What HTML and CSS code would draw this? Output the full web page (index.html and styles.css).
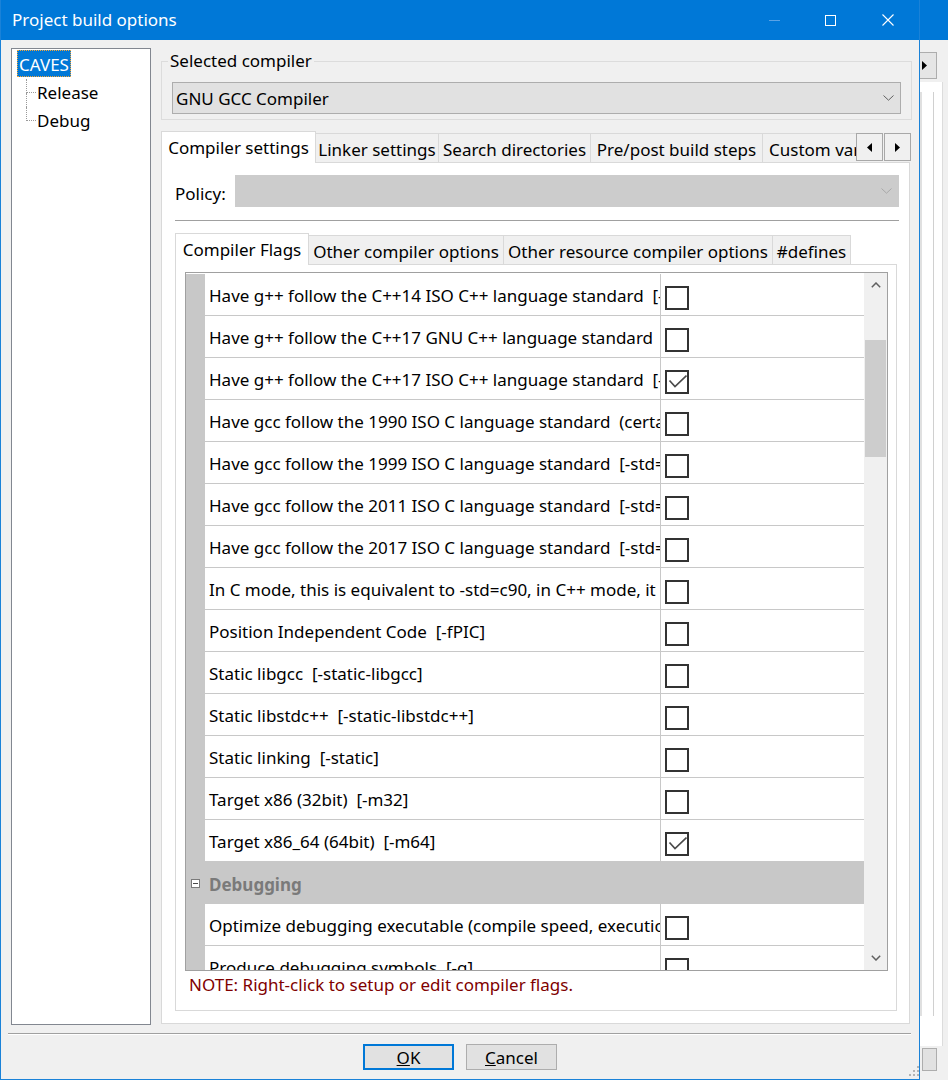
FILE: index.html
```html
<!DOCTYPE html>
<html>
<head>
<meta charset="utf-8">
<title>Project build options</title>
<link rel="stylesheet" href="styles.css">
</head>
<body>
<div class="desktop">
  <div class="window">
    <div class="titlebar">
      <span class="title">Project build options</span>
      <div class="caption">
        <span class="cbtn cbtn-min"><svg width="11" height="11" viewBox="0 0 11 11"><path d="M0 5.5H11" stroke="#5aa3e6" stroke-width="1"/></svg></span>
        <span class="cbtn"><svg width="11" height="11" viewBox="0 0 11 11"><rect x="0.5" y="0.5" width="10" height="10" fill="none" stroke="#fff" stroke-width="1"/></svg></span>
        <span class="cbtn"><svg width="12" height="12" viewBox="0 0 12 12"><path d="M0.5 0.5L11.5 11.5M11.5 0.5L0.5 11.5" stroke="#fff" stroke-width="1.1"/></svg></span>
      </div>
    </div>
    <div class="client">
      <div class="main">
        <div class="tree">
          <div class="tree-root"><span class="tree-sel">CAVES</span></div>
          <div class="tree-children">
            <div class="tree-item">
              <span class="conn"><span class="conn-top"></span><span class="conn-bot"></span></span>
              <span class="tree-label">Release</span>
            </div>
            <div class="tree-item">
              <span class="conn"><span class="conn-top"></span><span class="conn-bot conn-last"></span></span>
              <span class="tree-label">Debug</span>
            </div>
          </div>
        </div>
        <div class="right">
          <fieldset class="group">
            <legend>Selected compiler</legend>
            <div class="combo">
              <span class="combo-text">GNU GCC Compiler</span>
              <svg class="chev" width="11" height="6" viewBox="0 0 11 6"><path d="M0.5 0.5L5.5 5.2L10.5 0.5" fill="none" stroke="#606060" stroke-width="1"/></svg>
            </div>
          </fieldset>
          <div class="tabrow">
            <div class="tabs outer-tabs">
              <span class="tab active">Compiler settings</span>
              <span class="tab">Linker settings</span>
              <span class="tab">Search directories</span>
              <span class="tab">Pre/post build steps</span>
              <span class="tab">Custom variables</span>
            </div>
            <div class="spin">
              <span class="spin-btn"><svg width="5" height="9" viewBox="0 0 5 9"><path d="M5 0V9L0 4.5Z" fill="#000"/></svg></span>
              <span class="spin-btn"><svg width="5" height="9" viewBox="0 0 5 9"><path d="M0 0V9L5 4.5Z" fill="#000"/></svg></span>
            </div>
          </div>
          <div class="tabpage">
            <div class="policy">
              <span class="policy-label">Policy:</span>
              <div class="combo combo-disabled">
                <svg class="chev" width="11" height="6" viewBox="0 0 11 6"><path d="M0.5 0.5L5.5 5.2L10.5 0.5" fill="none" stroke="#a8a8a8" stroke-width="1"/></svg>
              </div>
            </div>
            <div class="hsep"></div>
            <div class="tabs inner-tabs">
              <span class="tab active">Compiler Flags</span>
              <span class="tab">Other compiler options</span>
              <span class="tab">Other resource compiler options</span>
              <span class="tab">#defines</span>
            </div>
            <div class="innerpage">
              <div class="grid">
                <div class="grid-rows">
                  <div class="row"><span class="gutter"></span><span class="label">Have g++ follow the C++14 ISO C++ language standard  [-std=c++14]</span><span class="value"><span class="cb"></span></span></div>
                  <div class="row"><span class="gutter"></span><span class="label">Have g++ follow the C++17 GNU C++ language standard  [-std=gnu++17]</span><span class="value"><span class="cb"></span></span></div>
                  <div class="row"><span class="gutter"></span><span class="label">Have g++ follow the C++17 ISO C++ language standard  [-std=c++17]</span><span class="value"><span class="cb"><svg width="20" height="20" viewBox="0 0 20 20"><path d="M2.5 8.5L8 14.5L19.5 3.5" fill="none" stroke="#4a4a4a" stroke-width="1.7"/></svg></span></span></div>
                  <div class="row"><span class="gutter"></span><span class="label">Have gcc follow the 1990 ISO C language standard  (certain GNU extensions are disabled)  [-std=c90]</span><span class="value"><span class="cb"></span></span></div>
                  <div class="row"><span class="gutter"></span><span class="label">Have gcc follow the 1999 ISO C language standard  [-std=c99]</span><span class="value"><span class="cb"></span></span></div>
                  <div class="row"><span class="gutter"></span><span class="label">Have gcc follow the 2011 ISO C language standard  [-std=c11]</span><span class="value"><span class="cb"></span></span></div>
                  <div class="row"><span class="gutter"></span><span class="label">Have gcc follow the 2017 ISO C language standard  [-std=c17]</span><span class="value"><span class="cb"></span></span></div>
                  <div class="row"><span class="gutter"></span><span class="label">In C mode, this is equivalent to -std=c90, in C++ mode, it is equivalent to -std=c++98  [-ansi]</span><span class="value"><span class="cb"></span></span></div>
                  <div class="row"><span class="gutter"></span><span class="label">Position Independent Code  [-fPIC]</span><span class="value"><span class="cb"></span></span></div>
                  <div class="row"><span class="gutter"></span><span class="label">Static libgcc  [-static-libgcc]</span><span class="value"><span class="cb"></span></span></div>
                  <div class="row"><span class="gutter"></span><span class="label">Static libstdc++  [-static-libstdc++]</span><span class="value"><span class="cb"></span></span></div>
                  <div class="row"><span class="gutter"></span><span class="label">Static linking  [-static]</span><span class="value"><span class="cb"></span></span></div>
                  <div class="row"><span class="gutter"></span><span class="label">Target x86 (32bit)  [-m32]</span><span class="value"><span class="cb"></span></span></div>
                  <div class="row"><span class="gutter"></span><span class="label">Target x86_64 (64bit)  [-m64]</span><span class="value"><span class="cb"><svg width="20" height="20" viewBox="0 0 20 20"><path d="M2.5 8.5L8 14.5L19.5 3.5" fill="none" stroke="#4a4a4a" stroke-width="1.7"/></svg></span></span></div>
                  <div class="category"><span class="collapse"><svg width="9" height="9" viewBox="0 0 9 9"><rect x="0.5" y="0.5" width="8" height="8" fill="#fff" stroke="#7a7a7a"/><path d="M2 4.5H7" stroke="#4a4a4a"/></svg></span><span class="cat-label">Debugging</span></div>
                  <div class="row"><span class="gutter"></span><span class="label">Optimize debugging executable (compile speed, execution speed, debuggability)  [-Og]</span><span class="value"><span class="cb"></span></span></div>
                  <div class="row"><span class="gutter"></span><span class="label">Produce debugging symbols  [-g]</span><span class="value"><span class="cb"></span></span></div>
                </div>
                <div class="scrollbar">
                  <span class="sb-btn"><svg width="10" height="6" viewBox="0 0 10 6"><path d="M0.8 5.2L5 1L9.2 5.2" fill="none" stroke="#606060" stroke-width="1.5"/></svg></span>
                  <span class="sb-thumb"></span>
                  <span class="sb-btn sb-down"><svg width="10" height="6" viewBox="0 0 10 6"><path d="M0.8 0.8L5 5L9.2 0.8" fill="none" stroke="#606060" stroke-width="1.5"/></svg></span>
                </div>
              </div>
              <div class="note">NOTE: Right-click to setup or edit compiler flags.</div>
            </div>
          </div>
        </div>
      </div>
      <div class="footsep"></div>
      <div class="footer">
        <span></span>
        <div class="btns">
          <span class="btn btn-default"><u>O</u>K</span>
          <span class="btn"><u>C</u>ancel</span>
        </div>
        <span class="grip"><svg width="12" height="12" viewBox="0 0 12 12" fill="#b4b4b4"><rect x="10" y="0" width="2" height="2"/><rect x="6" y="4" width="2" height="2"/><rect x="10" y="4" width="2" height="2"/><rect x="2" y="8" width="2" height="2"/><rect x="6" y="8" width="2" height="2"/><rect x="10" y="8" width="2" height="2"/></svg></span>
      </div>
    </div>
  </div>
  <div class="bgwin">
    <div class="bg-title"></div>
    <div class="bg-body">
      <span class="bg-arrow"><svg width="5" height="9" viewBox="0 0 5 9"><path d="M0 0V9L5 4.5Z" fill="#000"/></svg></span>
      <div class="bg-panel">
        <div class="bg-inner"></div>
      </div>
      <span class="bg-btn"></span>
    </div>
  </div>
</div>
</body>
</html>
```
FILE: styles.css
```css
* { box-sizing: border-box; }
html, body { margin: 0; padding: 0; }
body {
  width: 948px;
  height: 1080px;
  overflow: hidden;
  background: #f0f0f0;
  font-family: "Noto Sans", "Open Sans", sans-serif;
  font-size: 17px;
  color: #000;
}
.desktop { display: flex; width: 948px; height: 1080px; }

/* window */
.window {
  flex: none;
  width: 920px;
  height: 1080px;
  display: flex;
  flex-direction: column;
  background: #f0f0f0;
  border: 1px solid #1a82d8;
  border-top: 0;
}
.titlebar {
  flex: none;
  height: 40px;
  background: #0078d7;
  display: flex;
  align-items: center;
  padding-left: 11px;
  color: #fff;
}
.title { flex: 1; font-size: 17px; line-height: 40px; }
.caption { display: flex; height: 40px; margin-right: 2px; }
.cbtn { width: 58px; display: flex; align-items: center; justify-content: center; }
.cbtn-min { padding-left: 4px; }

.client { flex: 1; display: flex; flex-direction: column; min-height: 0; }
.main { flex: 1; display: flex; padding: 8px 7px 0 10px; min-height: 0; }

/* tree */
.tree {
  flex: none;
  width: 140px;
  background: #fff;
  border: 1px solid #828790;
  padding: 1px 0 0 5px;
}
.tree-root { height: 27px; margin-bottom: 2px; display: flex; }
.tree-sel {
  height: 27px;
  line-height: 25px;
  padding: 1px 1px 0;
  background: #0078d7;
  color: #fff;
  border: 1px dotted #f4a63a;
}
.tree-children { margin-left: 9px; }
.tree-item { display: flex; height: 28px; align-items: stretch; }
.conn { width: 10px; display: flex; flex-direction: column; }
.conn-top { height: 14px; border-left: 1px dotted #9a9a9a; border-bottom: 1px dotted #9a9a9a; }
.conn-bot { flex: 1; border-left: 1px dotted #9a9a9a; }
.conn-last { border-left: 0; }
.tree-label { line-height: 28px; padding-left: 1px; }

/* right side */
.right { flex: 1; min-width: 0; margin-left: 10px; display: flex; flex-direction: column; padding-bottom: 1px; }
.group {
  margin: 2px 0 0;
  padding: 10px 10px 5px;
  border: 1px solid #dcdcdc;
  min-width: 0;
}
.group legend { padding: 0 2px; margin-left: -4px; line-height: 22px; }
.combo {
  height: 32px;
  display: flex;
  align-items: center;
  background: #e1e1e1;
  border: 1px solid #adadad;
  padding: 0 6px 0 3px;
}
.combo-text { flex: 1; }
.chev { margin-left: auto; }

/* tabs */
.tabrow { display: flex; align-items: flex-end; height: 32px; margin-top: 11px; margin-right: 1px; position: relative; z-index: 1; }
.tabs { display: flex; align-items: flex-end; height: 32px; }
.outer-tabs { flex: 1; min-width: 0; overflow: hidden; }
.tab {
  flex: none;
  height: 30px;
  line-height: 26px;
  padding-top: 3px;
  text-align: center;
  white-space: nowrap;
  background: #f0f0f0;
  border: 1px solid #d9d9d9;
  margin-left: -1px;
}
.tab:first-child { margin-left: 0; }
.tab.active {
  height: 32px;
  line-height: 28px;
  padding-top: 2px;
  background: #fff;
  border-bottom: 0;
  position: relative;
  z-index: 1;
}
.outer-tabs .tab:nth-child(1) { width: 155px; }
.outer-tabs .tab:nth-child(2) { width: 124px; }
.outer-tabs .tab:nth-child(3) { width: 153px; }
.outer-tabs .tab:nth-child(4) { width: 173px; }
.outer-tabs .tab:nth-child(5) { width: 150px; text-align: left; padding-left: 6px; }
.spin { display: flex; gap: 1px; margin-bottom: 2px; }
.spin-btn {
  width: 27px;
  height: 28px;
  display: flex;
  align-items: center;
  justify-content: center;
  background: #f0f0f0;
  border: 1px solid #a8a8a8;
}

.tabpage {
  flex: 1;
  min-height: 0;
  margin-top: -1px;
  margin-right: 2px;
  background: #fff;
  border: 1px solid #d9d9d9;
  padding: 12px 10px 12px 13px;
  display: flex;
  flex-direction: column;
}
.policy { display: flex; align-items: center; height: 32px; }
.policy-label { width: 60px; flex: none; padding-top: 5px; }
.combo-disabled { flex: 1; background: #cccccc; border-color: #cccccc; }
.hsep { height: 1px; background: #a0a0a0; margin-top: 13px; flex: none; }

.inner-tabs { margin-top: 12px; flex: none; position: relative; z-index: 1; }
.inner-tabs .tab:nth-child(1) { width: 134px; }
.inner-tabs .tab:nth-child(2) { width: 196px; }
.inner-tabs .tab:nth-child(3) { width: 270px; }
.inner-tabs .tab:nth-child(4) { width: 79px; }

.innerpage {
  flex: 1;
  min-height: 0;
  margin-top: -1px;
  margin-right: 2px;
  border: 1px solid #d9d9d9;
  background: #fff;
  padding: 7px 8px 15px 9px;
  display: flex;
  flex-direction: column;
}

/* property grid */
.grid {
  flex: 1;
  min-height: 0;
  display: flex;
  border: 1px solid #a0a0a0;
}
.grid-rows { flex: 1; min-width: 0; overflow: hidden; padding-top: 1px; }
.row { display: flex; height: 42px; }
.gutter { flex: none; width: 19px; background: #c8c8c8; }
.label {
  flex: none;
  width: 456px;
  overflow: hidden;
  white-space: pre;
  padding: 2px 0 0 4px;
  display: flex;
  align-items: center;
  border-right: 1px solid #c8c8c8;
  border-bottom: 1px solid #c8c8c8;
}
.value {
  flex: 1;
  border-bottom: 1px solid #c8c8c8;
  padding: 12px 0 0 4px;
}
.cb {
  display: block;
  width: 24px;
  height: 24px;
  border: 2px solid #333;
  background: #fff;
}
.cb svg { display: block; }
.category {
  height: 42px;
  background: #c8c8c8;
  display: flex;
  align-items: center;
  padding-left: 5px;
}
.collapse { display: flex; width: 18px; padding-top: 1px; }
.cat-label { font-weight: bold; color: #7a7a7a; padding-top: 2px; }

.scrollbar { flex: none; width: 23px; background: #f0f0f0; display: flex; flex-direction: column; }
.sb-btn { height: 24px; display: flex; align-items: center; justify-content: center; flex: none; }
.sb-thumb { height: 117px; margin: 43px 1px 0 1px; background: #cdcdcd; flex: none; }
.sb-down { margin-top: auto; }

.note { margin-top: 4px; line-height: 20px; color: #800000; padding-left: 4px; white-space: nowrap; }

/* footer */
.footsep { flex: none; height: 2px; margin: 8px 8px 0 7px; border-top: 1px solid #a0a0a0; background: #fff; }
.footer {
  flex: none;
  display: grid;
  grid-template-columns: 1fr auto 1fr;
  padding-top: 9px;
}
.btns { display: flex; gap: 12px; margin-bottom: 9px; }
.btn {
  width: 91px;
  height: 26px;
  display: flex;
  align-items: center;
  justify-content: center;
  padding-top: 1px;
  background: #e1e1e1;
  border: 1px solid #adadad;
}
.btn-default { border: 2px solid #0078d7; }
.grip { justify-self: end; align-self: end; display: flex; margin-bottom: 1px; }

/* background window on the right */
.bgwin { flex: 1; display: flex; flex-direction: column; }
.bg-title { height: 40px; background: #0078d7; flex: none; }
.bg-body { flex: 1; display: flex; flex-direction: column; padding-top: 12px; background: #f0f0f0; }
.bg-arrow {
  width: 17px;
  height: 27px;
  display: flex;
  align-items: center;
  padding-left: 2px;
  background: #e5e5e5;
  border: 1px solid #adadad;
  border-left: 0;
}
.bg-panel {
  flex: 1;
  width: 23px;
  margin-top: 3px;
  background: #fff;
  border-right: 1px solid #dcdcdc;
  padding: 10px 0 30px 0;
  display: flex;
}
.bg-inner { width: 14px; border-right: 1px solid #d0d0d0; border-left: 2px solid #e0e0e0; }
.bg-btn { width: 15px; height: 23px; margin: 2px 0 9px 2px; background: #e1e1e1; border: 1px solid #adadad; }
```
